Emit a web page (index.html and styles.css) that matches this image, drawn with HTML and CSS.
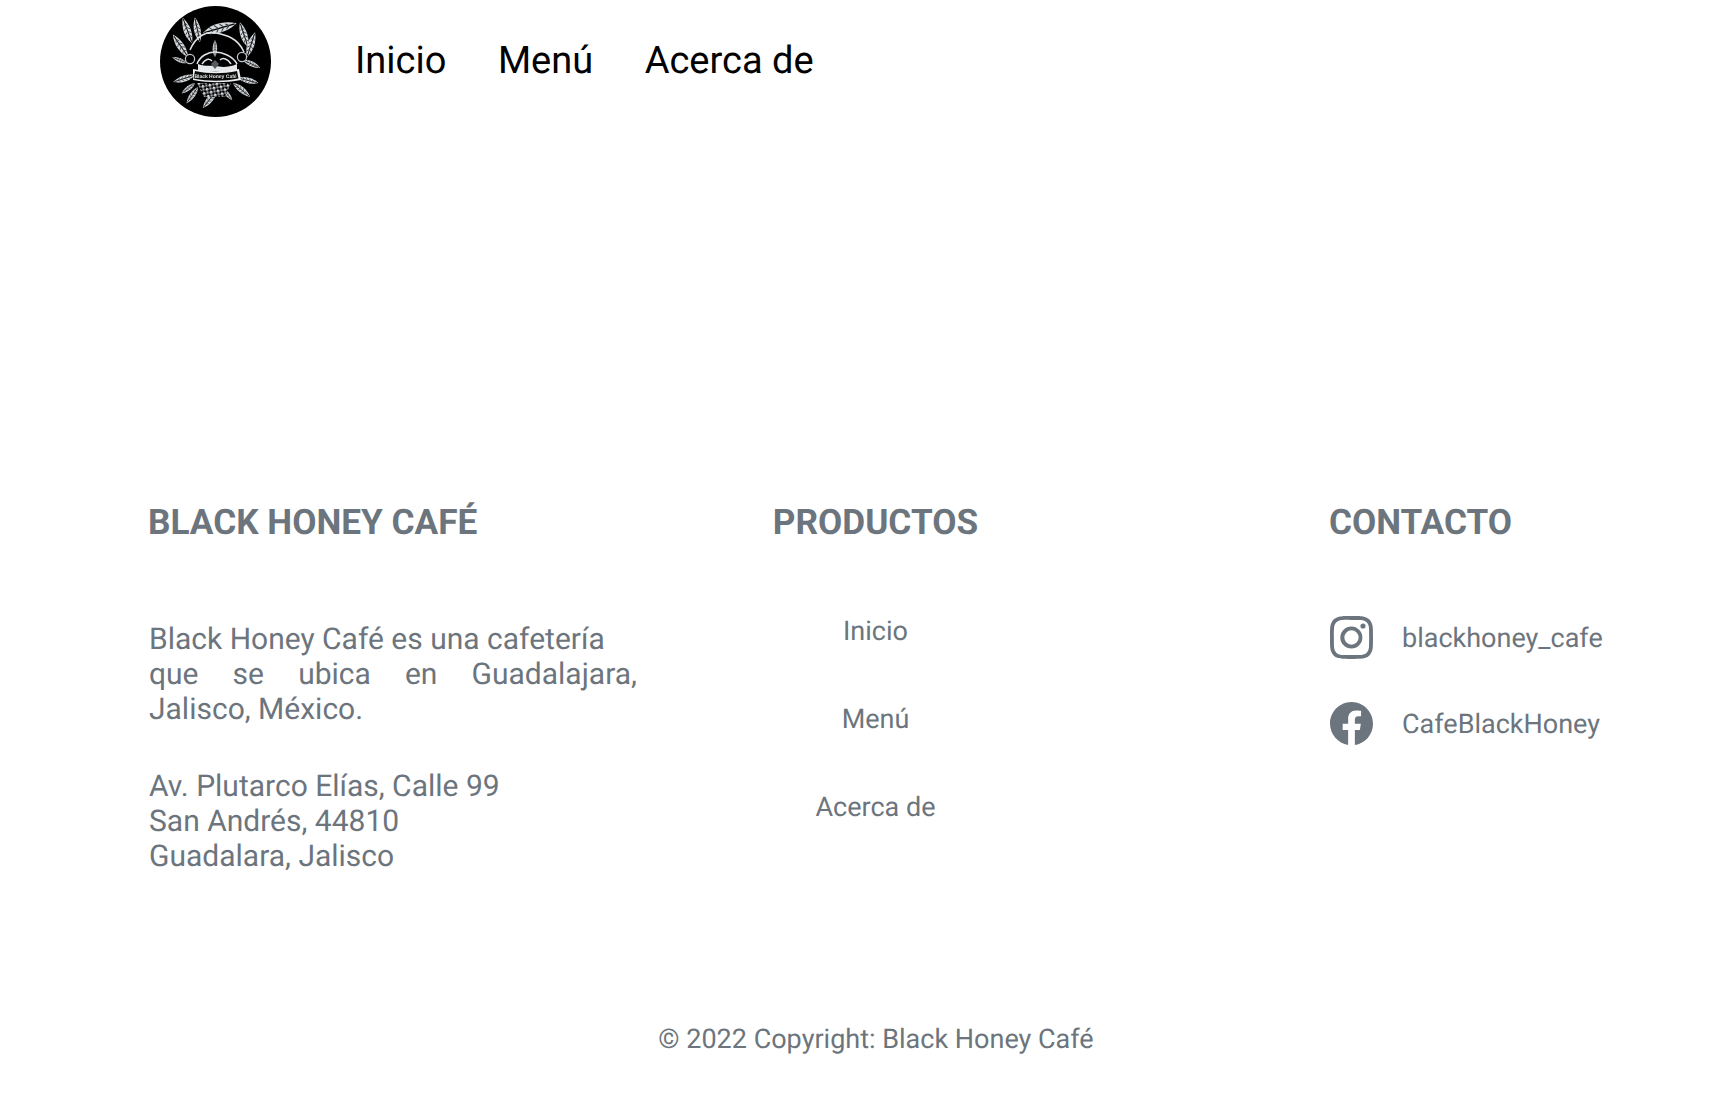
FILE: index.html
```html
<!DOCTYPE html>
<html lang="es">
<head>
<meta charset="utf-8">
<title>Black Honey Café</title>
<link rel="stylesheet" href="styles.css">
</head>
<body>
<header class="nav">
  <svg class="logo" viewBox="0 0 111 111" aria-label="Black Honey Café">
    <defs>
      <g id="leaf">
        <path class="leaf-body" d="M0 0C-.2-.3-.17-.7 0-1C.16-.7.18-.3 0 0z"/>
        <path class="leaf-vein" d="M0-.04V-.94"/>
        <path class="leaf-side" d="M-.11-.2L0-.3M-.12-.36L0-.46M-.11-.52L0-.62M-.07-.68L0-.78M.11-.2L0-.3M.12-.36L0-.46M.11-.52L0-.62M.07-.68L0-.78"/>
      </g>
      <pattern id="beans" width="5" height="5" patternUnits="userSpaceOnUse" patternTransform="rotate(35)">
        <rect width="5" height="5" fill="#000"/>
        <rect width="2.6" height="2.6" fill="#d9dde0"/>
        <rect x="2.5" y="2.5" width="2.2" height="2.2" fill="#aab0b6"/>
      </pattern>
    </defs>
    <circle cx="55.5" cy="55.5" r="55.5" fill="#000"/>
    <use href="#leaf" transform="translate(32 37) rotate(-20) scale(27)"/>
    <use href="#leaf" transform="translate(40 36) rotate(-12) scale(25)"/>
    <use href="#leaf" transform="translate(28 51) rotate(-34) scale(27)"/>
    <use href="#leaf" transform="translate(27 57) rotate(-68) scale(16)"/>
    <use href="#leaf" transform="translate(43 27) rotate(74) scale(35)"/>
    <use href="#leaf" transform="translate(88 41) rotate(-18) scale(26)"/>
    <use href="#leaf" transform="translate(87 51) rotate(18) scale(26)"/>
    <use href="#leaf" transform="translate(83 54) rotate(115) scale(19)"/>
    <use href="#leaf" transform="translate(55 51) scale(17)"/>
    <use href="#leaf" transform="translate(35 69) rotate(-108) scale(23)"/>
    <use href="#leaf" transform="translate(35 77) rotate(-128) scale(17)"/>
    <use href="#leaf" transform="translate(38 81) rotate(-145) scale(20)"/>
    <use href="#leaf" transform="translate(57 84) rotate(-142) scale(23)"/>
    <use href="#leaf" transform="translate(62 82) rotate(140) scale(16)"/>
    <use href="#leaf" transform="translate(73 77) rotate(129) scale(22)"/>
    <use href="#leaf" transform="translate(78 72) rotate(104) scale(21)"/>
    <path class="logo-line" d="M30 44C36 30 46 25 56 27S78 32 84 46"/>
    <path class="logo-line" d="M37 58C40 50 48 46 55 46S73 50 77 58"/>
    <path class="logo-line" d="M42 58c3-5 7-6 10-3M60 54c3-3 8-1 11 4"/>
    <path class="logo-fill" d="M38 58c8 3 14 1 18 2s12 2 21-2v7H38z"/>
    <circle class="berry" cx="30" cy="53" r="4.6"/>
    <circle class="berry" cx="82" cy="51" r="4.6"/>
    <path class="berry-dark" d="M51 58l4-4 4 4-4 5z"/>
    <path d="M37 77h34l-6 14H44z" fill="url(#beans)"/>
    <path class="ribbon-edge" d="M33 63c14 3 30 3 46 0l2 11c-16 3-32 3-48 0z"/>
    <path class="ribbon" d="M35 65c14 3 28 3 42 0l1.500 7.500c-15 3-30 3-45 0z"/>
    <text x="55.5" y="72" class="logo-text" text-anchor="middle">Black Honey Café</text>
  </svg>
  <nav class="nav-links">
    <a>Inicio</a>
    <a>Menú</a>
    <a>Acerca de</a>
  </nav>
</header>

<footer class="footer">
  <div class="cols">
    <section class="col col-about">
      <h6 class="col-title">BLACK HONEY CAFÉ</h6>
      <p class="about-text">Black Honey Café es una cafetería<br>que se ubica en Guadalajara, Jalisco, México.</p>
      <p class="address">Av. Plutarco Elías, Calle 99<br>San Andrés, 44810<br>Guadalara, Jalisco</p>
    </section>
    <section class="col col-products">
      <h6 class="col-title">PRODUCTOS</h6>
      <ul class="links">
        <li>Inicio</li>
        <li>Menú</li>
        <li>Acerca de</li>
      </ul>
    </section>
    <section class="col col-contact">
      <h6 class="col-title">CONTACTO</h6>
      <div class="contact-row contact-first">
        <svg class="icon" viewBox="0 0 16 16" fill="currentColor"><path d="M8 0C5.829 0 5.556.01 4.703.048 3.85.088 3.269.222 2.76.42a3.917 3.917 0 0 0-1.417.923A3.927 3.927 0 0 0 .42 2.76C.222 3.268.087 3.85.048 4.7.01 5.555 0 5.827 0 8.001c0 2.172.01 2.444.048 3.297.04.852.174 1.433.372 1.942.205.526.478.972.923 1.417.444.445.89.719 1.416.923.51.198 1.09.333 1.942.372C5.555 15.99 5.827 16 8 16s2.444-.01 3.298-.048c.851-.04 1.434-.174 1.943-.372a3.916 3.916 0 0 0 1.416-.923c.445-.445.718-.891.923-1.417.197-.509.332-1.09.372-1.942C15.99 10.445 16 10.173 16 8s-.01-2.445-.048-3.299c-.04-.851-.175-1.433-.372-1.941a3.926 3.926 0 0 0-.923-1.417A3.911 3.911 0 0 0 13.24.42c-.51-.198-1.092-.333-1.943-.372C10.443.01 10.172 0 7.998 0h.003zm-.717 1.442h.718c2.136 0 2.389.007 3.232.046.78.035 1.204.166 1.486.275.373.145.64.319.92.599.28.28.453.546.598.92.11.281.24.705.275 1.485.039.843.047 1.096.047 3.231s-.008 2.389-.047 3.232c-.035.78-.166 1.203-.275 1.485a2.47 2.47 0 0 1-.599.919c-.28.28-.546.453-.92.598-.28.11-.704.24-1.485.276-.843.038-1.096.047-3.232.047s-2.39-.009-3.233-.047c-.78-.036-1.203-.166-1.485-.276a2.478 2.478 0 0 1-.92-.598 2.48 2.48 0 0 1-.6-.92c-.109-.281-.24-.705-.275-1.485-.038-.843-.046-1.096-.046-3.233 0-2.136.008-2.388.046-3.231.036-.78.166-1.204.276-1.486.145-.373.319-.64.599-.92.28-.28.546-.453.92-.598.282-.11.705-.24 1.485-.276.738-.034 1.024-.044 2.515-.045v.002zm4.988 1.328a.96.96 0 1 0 0 1.92.96.96 0 0 0 0-1.92zm-4.27 1.122a4.109 4.109 0 1 0 0 8.217 4.109 4.109 0 0 0 0-8.217zm0 1.441a2.667 2.667 0 1 1 0 5.334 2.667 2.667 0 0 1 0-5.334z"/></svg>
        <span>blackhoney_cafe</span>
      </div>
      <div class="contact-row">
        <svg class="icon" viewBox="0 0 16 16" fill="currentColor"><path d="M16 8.049c0-4.446-3.582-8.05-8-8.05C3.58 0-.002 3.603-.002 8.05c0 4.017 2.926 7.347 6.75 7.951v-5.625h-2.03V8.05H6.75V6.275c0-2.017 1.195-3.131 3.022-3.131.876 0 1.791.157 1.791.157v1.98h-1.009c-.993 0-1.303.621-1.303 1.258v1.51h2.218l-.354 2.326H9.25V16c3.824-.604 6.75-3.934 6.75-7.951z"/></svg>
        <span>CafeBlackHoney</span>
      </div>
    </section>
  </div>
  <p class="copyright">© 2022 Copyright: Black Honey Café</p>
</footer>
</body>
</html>
```
FILE: styles.css
```css
* { box-sizing: border-box; }
html, body { margin: 0; padding: 0; }
body {
  font-family: Roboto, "Liberation Sans", sans-serif;
  background: #fff;
  color: #6c757d;
  height: 1117px;
  overflow: hidden;
  text-rendering: geometricPrecision;
}
.nav {
  display: flex;
  align-items: center;
  height: 122px;
  padding-left: 160px;
}
.logo {
  width: 111px;
  height: 111px;
  flex: none;
  filter: blur(.4px);
}
.leaf-body { fill: #d6dade; }
.leaf-vein { fill: none; stroke: #000; stroke-width: .035; }
.leaf-side { fill: none; stroke: #3a3f44; stroke-width: .03; }
.logo-line { fill: none; stroke: #dfe2e5; stroke-width: 1.5; }
.logo-fill { fill: #e6e9ec; }
.berry { fill: #000; stroke: #c5cacf; stroke-width: 1.2; }
.berry-dark { fill: #555b61; }
.ribbon-edge { fill: #eceef0; }
.ribbon { fill: #0a0a0a; }
.logo-text {
  font-family: "Liberation Sans", sans-serif;
  font-size: 5px;
  font-weight: 700;
  fill: #e4e6e8;
}
.nav-links {
  display: flex;
  gap: 51.5px;
  margin-left: 84px;
  font-size: 38px;
  color: #000;
}
.footer {
  margin-top: 380px;
}
.cols {
  display: flex;
  align-items: flex-start;
  height: 519px;
}
.col-title {
  margin: 0;
  font-size: 35.2px;
  line-height: 40px;
  font-weight: 700;
}
.col-about {
  width: 489px;
  margin-left: 148px;
}
.about-text {
  margin: 80px 0 0;
  padding-left: 1px;
  font-size: 30px;
  line-height: 35px;
  text-align: justify;
}
.address {
  margin: 42px 0 0;
  padding-left: 1px;
  font-size: 30px;
  line-height: 35px;
}
.col-products {
  width: 206px;
  margin-left: 135.5px;
  text-align: center;
}
.links {
  list-style: none;
  margin: 69px 0 0;
  padding: 0;
  font-size: 27px;
  line-height: 40px;
  display: flex;
  flex-direction: column;
  gap: 48px;
}
.col-contact {
  margin-left: 350.5px;
}
.contact-row {
  display: flex;
  align-items: center;
  gap: 29px;
  margin-top: 42px;
  font-size: 27px;
  line-height: 44px;
}
.contact-first {
  margin-top: 74px;
}
.icon {
  width: 43px;
  height: 43px;
  flex: none;
  margin: -1px 0 0 1px;
}
.copyright {
  margin: 0;
  padding-left: 24px;
  text-align: center;
  font-size: 27px;
  line-height: 36px;
}
```
